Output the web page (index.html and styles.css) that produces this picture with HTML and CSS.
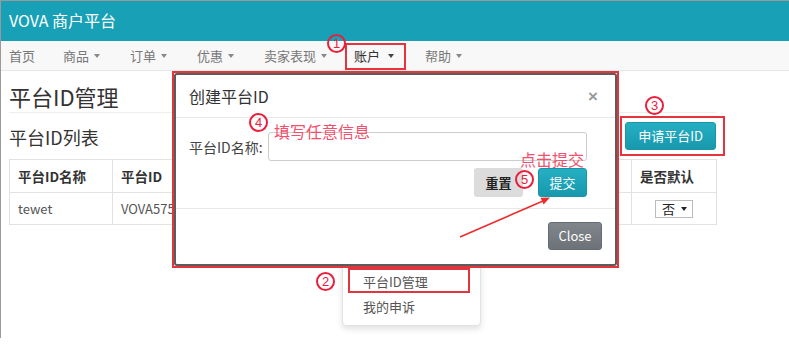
FILE: index.html
```
<!DOCTYPE html>
<html lang="zh-CN">
<head>
    <meta charset="UTF-8">
    <meta name="viewport" content="width=device-width, initial-scale=1.0">
    <title>VOVA 商户平台</title>
    <link rel="stylesheet" href="styles.css">
</head>
<body>
<div class="screen">
    <header class="topbar">VOVA 商户平台</header>
    <nav class="navbar">
        <span class="nav-item">首页</span>
        <span class="nav-item">商品<i class="caret"></i></span>
        <span class="nav-item">订单<i class="caret"></i></span>
        <span class="nav-item">优惠<i class="caret"></i></span>
        <span class="nav-item nav-wide">卖家表现<i class="caret"></i></span>
        <span class="nav-item active">账户<i class="caret"></i></span>
        <span class="nav-item">帮助<i class="caret"></i></span>
    </nav>

    <main class="content">
        <h1 class="page-title">平台ID管理</h1>
        <div class="list-head">
            <h2>平台ID列表</h2>
            <button class="btn btn-info">申请平台ID</button>
        </div>
        <table class="table">
            <colgroup>
                <col style="width: 103px">
                <col style="width: 130px">
                <col style="width: 200px">
                <col style="width: 189px">
                <col style="width: 85px">
            </colgroup>
            <thead>
            <tr>
                <th>平台ID名称</th>
                <th>平台ID</th>
                <th>状态</th>
                <th>创建时间</th>
                <th>是否默认</th>
            </tr>
            </thead>
            <tbody>
            <tr>
                <td>tewet</td>
                <td>VOVA5750012</td>
                <td>正常</td>
                <td>2018-06-12</td>
                <td class="center"><span class="select">否<i class="select-arrow"></i></span></td>
            </tr>
            </tbody>
        </table>
    </main>

    <!-- 账户下拉菜单 -->
    <ul class="dropdown">
        <li class="dropdown-item">平台ID管理</li>
        <li class="dropdown-item">我的申诉</li>
    </ul>

    <!-- 弹窗 -->
    <div class="modal">
        <div class="modal-content">
            <div class="modal-header">
                <span class="modal-title">创建平台ID</span>
                <span class="close">&times;</span>
            </div>
            <div class="modal-body">
                <div class="form-row">
                    <label for="platformName">平台ID名称:</label>
                    <input type="text" id="platformName">
                </div>
                <div class="form-actions">
                    <button class="btn btn-light">重置</button>
                    <button class="btn btn-info">提交</button>
                </div>
            </div>
            <div class="modal-footer">
                <button class="btn btn-gray">Close</button>
            </div>
        </div>
    </div>

    <!-- 标注 -->
    <div class="mark mark-account"></div>
    <div class="mark mark-apply"></div>
    <div class="mark mark-menu"></div>

    <span class="num num-1">1</span>
    <span class="num num-2">2</span>
    <span class="num num-3">3</span>
    <span class="num num-4">4</span>
    <span class="num num-5">5</span>

    <span class="note note-fill">填写任意信息</span>
    <span class="note note-submit">点击提交</span>

    <svg class="arrow" width="789" height="338" viewBox="0 0 789 338">
        <line x1="460" y1="237" x2="543" y2="201" stroke="#ee2b2b" stroke-width="1.5"/>
        <polygon points="550,197.5 543.6,204.6 540.6,197.8" fill="#ee2b2b"/>
    </svg>
</div>
</body>
</html>
```

FILE: styles.css
```
* {
    box-sizing: border-box;
}

body {
    margin: 0;
    background-color: #fff;
    font-family: "Noto Sans CJK SC", "Liberation Sans", sans-serif;
    color: #333;
}

.screen {
    position: relative;
    width: 789px;
    height: 338px;
    overflow: hidden;
}

.screen::after {
    content: "";
    position: absolute;
    top: 0;
    left: 0;
    width: 788px;
    height: 337px;
    border: 1px solid #9a9a9a;
    border-bottom: 2px solid #7d7d7d;
    pointer-events: none;
}

.topbar {
    height: 41px;
    padding-left: 9px;
    background-color: #18a1b6;
    color: #fff;
    font-size: 16px;
    line-height: 41px;
}

.navbar {
    display: flex;
    height: 30px;
    padding-left: 9px;
    background-color: #f8f8f8;
    border-bottom: 1px solid #e7e7e7;
    font-size: 13px;
    line-height: 29px;
    color: #777;
}

.nav-item {
    display: flex;
    align-items: center;
    margin-right: 30px;
}

.nav-item:first-child {
    margin-right: 28px;
}

.nav-item.nav-wide {
    margin-right: 27px;
}

.nav-item.active {
    color: #333;
    margin-right: 31px;
}

.caret {
    display: inline-block;
    width: 0;
    height: 0;
    margin-left: 5px;
    border-top: 4px solid #888;
    border-left: 3.5px solid transparent;
    border-right: 3.5px solid transparent;
}

.nav-item.active .caret {
    border-top-color: #444;
    margin-left: 8px;
}

.content {
    padding: 0 73px 0 9px;
}

.page-title {
    margin: 11px 0 0;
    padding-bottom: 2px;
    font-size: 22px;
    font-weight: normal;
    line-height: 28px;
    border-bottom: 1px solid #eee;
}

.list-head {
    display: flex;
    justify-content: space-between;
    align-items: center;
    margin-top: 7px;
}

.list-head h2 {
    margin: 0;
    padding-top: 3px;
    font-size: 18px;
    font-weight: normal;
    line-height: 28px;
}

.btn {
    height: 28px;
    padding: 0 12px;
    border: 1px solid transparent;
    border-radius: 3px;
    font-family: inherit;
    font-size: 13px;
    line-height: 26px;
    cursor: pointer;
}

.btn-info {
    background: linear-gradient(#25afc3, #1898ad);
    border-color: #1a96aa;
    color: #fff;
}

.btn-light {
    background-color: #dcdcdc;
    color: #222;
    font-weight: bold;
}

.btn-gray {
    background: linear-gradient(#80868b, #6c7277);
    border-color: #656b70;
    color: #fff;
}

.table {
    width: 100%;
    margin-top: 8px;
    border-collapse: collapse;
    table-layout: fixed;
    font-size: 13.5px;
}

.table th,
.table td {
    padding: 0 8px;
    border: 1px solid #e2e2e2;
    text-align: left;
    white-space: nowrap;
    overflow: hidden;
}

.table th {
    height: 33px;
    color: #333;
}

.table td {
    height: 32px;
    font-size: 13px;
    color: #555;
}

.table td.center {
    text-align: center;
}

.select {
    display: inline-flex;
    align-items: center;
    height: 18px;
    padding: 0 5px 0 6px;
    border: 1px solid #bbb;
    color: #222;
    font-size: 13px;
    line-height: 16px;
}

.select-arrow {
    display: inline-block;
    width: 0;
    height: 0;
    margin-left: 6px;
    border-top: 4px solid #222;
    border-left: 3px solid transparent;
    border-right: 3px solid transparent;
}

/* 下拉菜单 */
.dropdown {
    position: absolute;
    top: 262px;
    left: 342px;
    width: 139px;
    margin: 0;
    padding: 6px 0;
    list-style: none;
    background-color: #fff;
    border: 1px solid #e3e3e3;
    border-radius: 4px;
    box-shadow: 0 3px 6px rgba(0, 0, 0, 0.12);
    font-size: 13px;
    color: #555;
}

.dropdown-item {
    height: 25px;
    padding-left: 20px;
    line-height: 25px;
}

/* 弹窗 */
.modal {
    position: absolute;
    top: 71px;
    left: 172px;
    width: 447px;
    height: 197px;
    border: 2px solid #e2353d;
}

.modal-content {
    height: 100%;
    background-color: #fff;
    border: 2px solid #5c5c5c;
    border-radius: 3px;
}

.modal-header {
    display: flex;
    justify-content: space-between;
    align-items: center;
    height: 43px;
    padding: 0 17px 0 13px;
    border-bottom: 1px solid #e8e8e8;
}

.modal-title {
    font-size: 16px;
    color: #333;
}

.close {
    font-family: "Liberation Sans", sans-serif;
    font-size: 17px;
    font-weight: bold;
    color: #9a9a9a;
    line-height: 17px;
}

.modal-body {
    padding: 14px 28px 11px 13px;
    border-bottom: 1px solid #e8e8e8;
}

.form-row {
    display: flex;
    align-items: center;
}

.form-row label {
    width: 79px;
    font-size: 14px;
    color: #444;
}

.form-row input {
    flex: 1;
    height: 29px;
    border: 1px solid #ccc;
    border-radius: 3px;
}

.form-actions {
    display: flex;
    justify-content: flex-end;
    gap: 15px;
    margin-top: 7px;
}

.form-actions .btn {
    width: 49px;
    height: 29px;
    padding: 0;
}

.modal-footer {
    display: flex;
    justify-content: flex-end;
    padding: 13px 13px 0 0;
}

.modal-footer .btn {
    width: 54px;
    padding: 0;
}

/* 标注 */
.mark {
    position: absolute;
    border: 2px solid #e2353d;
}

.mark-account {
    top: 43px;
    left: 345px;
    width: 61px;
    height: 27px;
}

.mark-apply {
    top: 116px;
    left: 620px;
    width: 105px;
    height: 40px;
}

.mark-menu {
    top: 268px;
    left: 348px;
    width: 122px;
    height: 25px;
}

.num {
    position: absolute;
    width: 19px;
    height: 19px;
    border: 2px solid #e8203d;
    border-radius: 50%;
    color: #e8203d;
    font-family: "Liberation Sans", sans-serif;
    font-size: 13px;
    line-height: 15px;
    text-align: center;
}

.num-1 { top: 34px; left: 327px; }
.num-2 { top: 272px; left: 316px; }
.num-3 { top: 96px; left: 645px; }
.num-4 { top: 113px; left: 249px; }
.num-5 { top: 170px; left: 515px; }

.note {
    position: absolute;
    font-size: 16px;
    line-height: 18px;
    color: #f2506c;
}

.note-fill {
    top: 122px;
    left: 274px;
}

.note-submit {
    top: 150px;
    left: 520px;
}

.arrow {
    position: absolute;
    top: 0;
    left: 0;
    pointer-events: none;
}
```
